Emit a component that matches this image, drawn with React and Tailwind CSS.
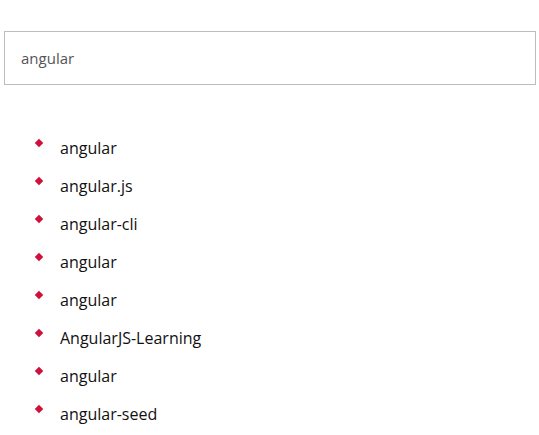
import React from "react";

const items = [
  "angular",
  "angular.js",
  "angular-cli",
  "angular",
  "angular",
  "AngularJS-Learning",
  "angular",
  "angular-seed",
];

export default function App() {
  return (
    <div className="w-[539px] h-[435px] bg-white overflow-hidden" style={{ fontFamily: '"Open Sans", sans-serif' }}>
      <div className="pt-[31px] pl-[4px]">
        <div className="w-[532px] h-[54px] border border-[#bdbdbd] flex items-center pl-[16px] text-[15px] text-[#555]">
          angular
        </div>
      </div>
      <ul className="mt-[44px]">
        {items.map((t, i) => (
          <li key={i} className="h-[38px] flex items-center text-[16px] text-[#111]">
            <span className="w-[60px] relative h-full">
              <span className="absolute left-[36px] top-[11px] w-[6px] h-[6px] bg-[#d0103a] rotate-45" />
            </span>
            <span>{t}</span>
          </li>
        ))}
      </ul>
    </div>
  );
}
